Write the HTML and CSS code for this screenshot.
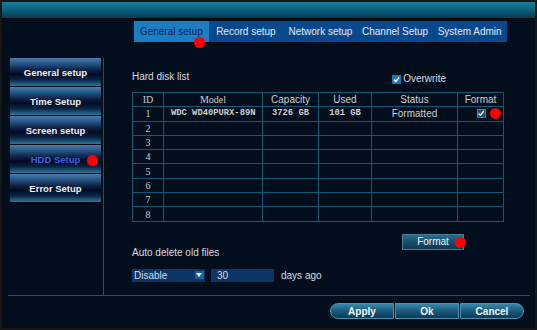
FILE: index.html
```html
<!DOCTYPE html>
<html>
<head>
<meta charset="utf-8">
<title>HDD Setup</title>
<link rel="stylesheet" href="styles.css">
</head>
<body>
<div class="screen">
	<div class="topbar"></div>
	<ul class="tabs">
		<li class="on">General setup<span class="dot dot_tab"></span></li>
		<li>Record setup</li>
		<li>Network setup</li>
		<li>Channel Setup</li>
		<li>System Admin</li>
	</ul>

	<div class="body">
		<ul class="side">
			<li>General setup</li>
			<li>Time Setup</li>
			<li>Screen setup</li>
			<li class="sel">HDD Setup<span class="dot dot_side"></span></li>
			<li>Error Setup</li>
		</ul>

		<div class="main">
			<div class="head_row">
				<span>Hard disk list</span>
				<label class="overwrite"><span class="chk chk_blue"><svg viewBox="0 0 9 9" width="9" height="9"><path d="M2 4.6 L3.8 6.4 L7.2 2.2" fill="none" stroke="#fff" stroke-width="1.5"/></svg></span>Overwrite</label>
			</div>

			<table class="disk">
				<tr><th class="serif c_id">ID</th><th class="serif c_model">Model</th><th class="c_cap">Capacity</th><th class="c_used">Used</th><th class="c_status">Status</th><th class="c_fmt">Format</th></tr>
				<tr><td class="serif">1</td><td class="mono">WDC WD40PURX-89N</td><td class="mono">3726 GB</td><td class="mono">101 GB</td><td>Formatted</td><td><div class="fmt_cell"><span class="chk chk_green"><svg viewBox="0 0 9 9" width="9" height="9"><path d="M1.6 4.4 L3.4 6.2 L6.8 2" fill="none" stroke="#fff" stroke-width="1.4"/></svg></span><span class="dot dot_fmt"></span></div></td></tr>
				<tr><td class="serif">2</td><td></td><td></td><td></td><td></td><td></td></tr>
				<tr><td class="serif">3</td><td></td><td></td><td></td><td></td><td></td></tr>
				<tr><td class="serif">4</td><td></td><td></td><td></td><td></td><td></td></tr>
				<tr><td class="serif">5</td><td></td><td></td><td></td><td></td><td></td></tr>
				<tr><td class="serif">6</td><td></td><td></td><td></td><td></td><td></td></tr>
				<tr><td class="serif">7</td><td></td><td></td><td></td><td></td><td></td></tr>
				<tr><td class="serif">8</td><td></td><td></td><td></td><td></td><td></td></tr>
			</table>

			<div class="fmt_row">
				<button class="btn_fmt">Format<span class="dot dot_btn"></span></button>
			</div>

			<p class="auto_label">Auto delete old files</p>
			<div class="auto_row">
				<div class="select">Disable<span class="arrow"></span></div>
				<div class="num">30</div>
				<span>days ago</span>
			</div>
		</div>
	</div>

	<div class="foot">
		<button class="fbtn first">Apply</button>
		<button class="fbtn">Ok</button>
		<button class="fbtn last">Cancel</button>
	</div>
</div>
</body>
</html>
```

FILE: styles.css
```css
body,ul,li,p,table,th,td,button {margin: 0;padding: 0;}
body {background: #000;font-family: "Liberation Sans", Arial, sans-serif;font-size: 10px;color: #d6dbe0;}
ul {list-style: none;}

.screen {width: 537px;height: 330px;box-sizing: border-box;border: 2px solid #171717;background: #030e1c;overflow: hidden;}
.topbar {height: 16px;background: linear-gradient(#1a7e9e, #0d5f7d 50%, #063a50);border-bottom: 1px solid #01060c;}

.tabs {display: flex;width: 373px;height: 21px;margin: 2px 0 0 132px;background: #08488c;}
.tabs li {position: relative;flex: 1;line-height: 21px;text-align: center;white-space: nowrap;color: #e4e8f0;}
.tabs li.on {background: #1d7cc2;color: #0c2a58;}

.dot {position: absolute;width: 11px;height: 11px;border-radius: 50%;background: #ff0000;}
.dot_tab {left: 60px;top: 16px;}
.dot_side {left: 77px;top: 10px;}
.dot_fmt {left: 32px;top: 1px;}
.dot_btn {left: 52px;top: 2px;}

.body {display: flex;height: 237px;margin: 16px 5px 0 6px;border-bottom: 1px solid #0e5a72;}
.side {width: 93px;padding-left: 2px;border-right: 1px solid #0e5a72;}
.side li {position: relative;width: 91px;height: 29px;box-sizing: border-box;line-height: 29px;text-align: center;font-weight: bold;font-size: 9.5px;color: #eef0f4;border-bottom: 1px solid #020814;
	background: linear-gradient(#4a7cb0 0%, #2c5e8e 16%, #0e2248 42%, #050b20 58%, #0a2646 78%, #2c7898 100%);}
.side li.sel {color: #3d5ee0;}

.main {flex: 1;padding: 12px 0 0 28px;}
.head_row {display: flex;width: 372px;line-height: 14px;}
.overwrite {display: flex;align-items: center;margin: 2px 58px 0 auto;}
.chk {display: inline-block;width: 9px;height: 9px;box-sizing: border-box;}
.chk svg {display: block;}
.chk_blue {margin-right: 2px;background: #1e78b8;}
.chk_green {border: 1px solid #3a8a6a;background: #16577a;}
.chk_green svg {margin: -1px;}

.disk {margin-top: 6px;width: 372px;border-collapse: collapse;table-layout: fixed;}
.disk th,
.disk td {height: 13.3px;padding: 0;line-height: 13px;border: 1px solid #0e5a72;text-align: center;font-weight: normal;color: #c9cfd4;white-space: nowrap;}
.c_id {width: 30px;}
.c_model {width: 98px;}
.c_cap {width: 55px;}
.c_used {width: 52px;}
.c_status {width: 85px;}
.serif {font-family: "Liberation Serif", "Times New Roman", serif;}
.disk .mono {font-family: "Liberation Mono", "Courier New", monospace;font-size: 8.8px;font-weight: bold;}
.disk td.mono:nth-child(2) {text-align: left;padding-left: 7px;}
.fmt_cell {position: relative;display: flex;align-items: center;height: 13px;padding-left: 19px;}

.fmt_row {display: flex;justify-content: flex-end;width: 332px;margin-top: 12px;}
.btn_fmt {position: relative;width: 62px;height: 16px;border: 1px solid #3f7f9c;background: linear-gradient(#2c6c8c, #184e6c 50%, #0d3a55);color: #f0f4f8;font-family: inherit;font-size: 10px;}

.auto_label {margin-top: -3px;line-height: 12px;}
.auto_row {display: flex;align-items: center;margin-top: 10px;height: 13px;}
.select {position: relative;width: 73px;height: 13px;padding-left: 2px;box-sizing: border-box;line-height: 13px;background: #0b3666;}
.arrow {position: absolute;right: 1px;top: 2px;width: 9px;height: 8px;background: #1560a8;}
.arrow:after {content: "";position: absolute;left: 1px;top: 2px;border-left: 3.5px solid transparent;border-right: 3.5px solid transparent;border-top: 4px solid #fff;}
.num {width: 63px;height: 13px;margin: 0 7px 0 6px;padding-left: 6px;box-sizing: border-box;line-height: 13px;background: #0b3666;}

.foot {display: flex;justify-content: flex-end;padding: 7px 11px 0 0;gap: 1px;}
.fbtn {width: 64px;height: 16px;border: 1px solid #4a93b4;background: linear-gradient(#3a88a8, #1a5a7a 50%, #0b3a56);color: #f2f5f8;font-family: inherit;font-size: 10px;font-weight: bold;}
.fbtn.first {border-radius: 8px 0 0 8px;}
.fbtn.last {border-radius: 0 8px 8px 0;}
```
